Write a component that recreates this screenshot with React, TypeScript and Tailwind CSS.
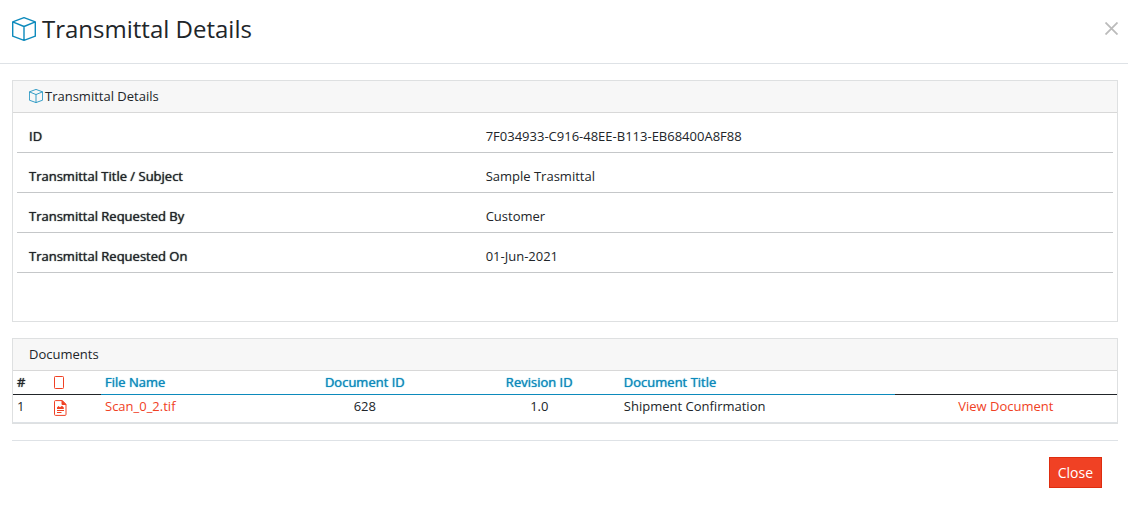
import type { ReactNode } from 'react';

interface Detail {
  label: string;
  value: string;
}

interface DocumentRow {
  fileName: string;
  documentId: number;
  revisionId: string;
  title: string;
}

const details: Detail[] = [
  { label: 'ID', value: '7F034933-C916-48EE-B113-EB68400A8F88' },
  { label: 'Transmittal Title / Subject', value: 'Sample Trasmittal' },
  { label: 'Transmittal Requested By', value: 'Customer' },
  { label: 'Transmittal Requested On', value: '01-Jun-2021' },
];

const documents: DocumentRow[] = [
  { fileName: 'Scan_0_2.tif', documentId: 628, revisionId: '1.0', title: 'Shipment Confirmation' },
];

// Thickens the regular cut without changing its width
const strong = 'font-normal [text-shadow:0_0_1px_currentColor]';
const plainHead = `${strong} border-b border-[#212529] px-1 pt-px pb-0.5`;
const sortHead = `${strong} border-b border-[#0c8abc] px-1 pt-px pb-0.5 text-[#0c8abc]`;
const cell = 'border-b border-[#dee2e6] px-1 pt-px pb-1.5';

function CubeIcon({ className }: { className: string }) {
  return (
    <svg viewBox="0 0 24 24" fill="none" stroke="currentColor" strokeWidth="1.4" strokeLinejoin="round" className={className} aria-hidden="true">
      <path d="M12 .7 23.3 4.900v14.300L12 23.300.7 19.200V4.900zM.7 4.900 12 9.500l11.300-4.600M12 9.500v13.800" />
    </svg>
  );
}

function PageIcon() {
  return (
    <svg width="10" height="13" viewBox="0 0 10 13" fill="none" stroke="currentColor" aria-hidden="true">
      <rect x=".5" y=".5" width="9" height="12" rx=".8" />
    </svg>
  );
}

function FileImageIcon() {
  return (
    <svg width="13" height="16" viewBox="0 0 13 16" fill="none" stroke="currentColor" aria-hidden="true">
      <path d="M1.500.600h6.800l3.700 3.700v10.100a1 1 0 0 1-1 1H1.500a1 1 0 0 1-1-1V1.600a1 1 0 0 1 1-1z" />
      <path d="M8 .8v3.700h3.800z" fill="currentColor" />
      <path d="M3 9V7.500l1.500-1.500 1.500 1.300L8 5.800l1.800 1.700V9z" fill="currentColor" stroke="none" />
      <path d="M3 10.500h7M3 12.500h4.500" />
    </svg>
  );
}

function Panel({ title, children }: { title: ReactNode; children: ReactNode }) {
  return (
    <section className="border border-[#dee0e1]">
      <h2 className="flex h-8 items-center gap-0.5 border-b border-[#d8d8d8] bg-[#f7f7f7] px-4 pb-0.5">{title}</h2>
      {children}
    </section>
  );
}

export default function App() {
  return (
    <div className="bg-white font-['Open_Sans',sans-serif] text-[13px] leading-5 text-[#212529]">
      <header className="flex h-16 items-center justify-between border-b border-[#dee2e6] pr-[10px] pb-1.5 pl-3">
        <h1 className="flex items-center gap-1.5 text-2xl">
          <CubeIcon className="size-6 text-[#0c8abc]" />
          Transmittal Details
        </h1>
        <button type="button" aria-label="Close dialog" className="text-[#bbb]">
          <svg width="13" height="13" viewBox="0 0 13 13" stroke="currentColor" strokeWidth="1.8" aria-hidden="true">
            <path d="M.5.500l12 12M12.500.500l-12 12" />
          </svg>
        </button>
      </header>

      <main className="flex flex-col gap-4 py-4 pr-[10px] pl-3">
        <Panel
          title={
            <>
              <CubeIcon className="size-[14px] text-[#0c8abc]" />
              Transmittal Details
            </>
          }
        >
          <dl className="px-1 pb-12">
            {details.map((item) => (
              <div key={item.label} className="grid h-10 grid-cols-12 items-end border-b border-[#c5c7c9] pb-1.5">
                <dt className={`${strong} col-span-5 px-3`}>{item.label}</dt>
                <dd className="col-span-7 px-3">{item.value}</dd>
              </div>
            ))}
          </dl>
        </Panel>

        <Panel title="Documents">
          <table className="w-full table-fixed border-separate border-spacing-0">
            <thead>
              <tr className="text-left">
                <th className={`${plainHead} w-[37px]`}>#</th>
                <th aria-label="File type" className="w-[51px] border-b border-[#212529] px-1 text-[#f04124]">
                  <PageIcon />
                </th>
                <th className={`${sortHead} w-[15.4%]`}>File Name</th>
                <th className={`${sortHead} w-[17%] text-center`}>Document ID</th>
                <th className={`${sortHead} w-[14.6%] text-center`}>Revision ID</th>
                <th className={`${sortHead} w-[24.9%]`}>Document Title</th>
                <th aria-label="Actions" className={plainHead}></th>
              </tr>
            </thead>
            <tbody>
              {documents.map((doc, index) => (
                <tr key={doc.documentId}>
                  <td className={cell}>{index + 1}</td>
                  <td className="border-b border-[#dee2e6] px-1 pb-0.5 text-[#f04124]">
                    <FileImageIcon />
                  </td>
                  <td className={cell}>
                    <a href="#file" className="text-[#f04124]">{doc.fileName}</a>
                  </td>
                  <td className={`${cell} text-center`}>{doc.documentId}</td>
                  <td className={`${cell} text-center`}>{doc.revisionId}</td>
                  <td className={cell}>{doc.title}</td>
                  <td className={`${cell} text-center`}>
                    <a href="#view" className="text-[#f04124]">View Document</a>
                  </td>
                </tr>
              ))}
            </tbody>
          </table>
        </Panel>

        <footer className="flex justify-end border-t border-[#dee2e6] px-4 pt-4">
          <button type="button" className="border border-[#de2d0f] bg-[#f04124] px-2 py-1 text-sm leading-[21px] text-white">
            Close
          </button>
        </footer>
      </main>
    </div>
  );
}
